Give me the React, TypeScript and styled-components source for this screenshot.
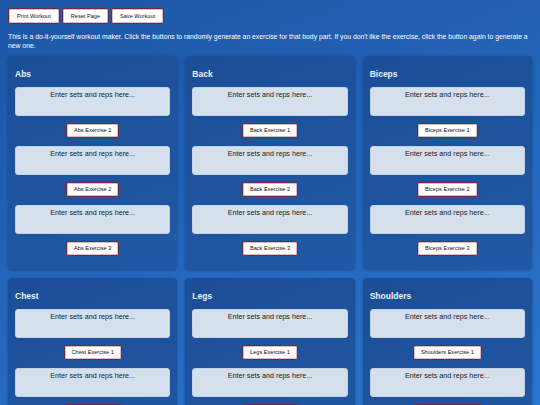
import * as React from 'react';
import styled, { createGlobalStyle } from 'styled-components';

const GlobalStyle = createGlobalStyle`
  html, body {
    margin: 0;
    padding: 0;
  }
  body {
    font-family: "Liberation Sans", Arial, sans-serif;
    background: linear-gradient(160deg, #1d56a6 0%, #2466bb 45%, #2c7bd3 100%);
    min-height: 100vh;
    overflow: hidden;
  }
`;

const Page = styled.div`
  padding: 8px;
  min-height: 100vh;
  box-sizing: border-box;
`;

const Toolbar = styled.div`
  display: flex;
  gap: 2px;
`;

const Button = styled.button`
  height: 16px;
  padding: 0 8px;
  background: #fff;
  color: #111;
  border: 1px solid #6e2a3f;
  border-radius: 2px;
  box-shadow: 0 0 0 0.5px #b87a8c inset;
  font-family: "Liberation Sans", Arial, sans-serif;
  font-size: 5.6px;
  line-height: 14px;
  cursor: pointer;
`;

const Intro = styled.p`
  margin: 9px 0 6px;
  color: #fff;
  font-size: 6.8px;
  line-height: 8.5px;
`;

const Grid = styled.div`
  display: grid;
  grid-template-columns: repeat(3, 1fr);
  gap: 9px 8px;
`;

const Card = styled.section`
  background: linear-gradient(160deg, #1c4e97 0%, #2059a6 100%);
  border-radius: 4px;
  box-shadow: 0 1px 3px rgba(0, 20, 60, 0.35);
  padding: 7px 7px 5px;
`;

const Title = styled.h2`
  margin: 6px 0 8px;
  color: #eaf2ff;
  font-size: 8.5px;
  line-height: 10px;
  font-weight: 700;
`;

const Group = styled.div`
  display: flex;
  flex-direction: column;
  align-items: center;
  margin-bottom: 8px;
`;

const Notes = styled.textarea`
  width: 100%;
  height: 29px;
  box-sizing: border-box;
  margin: 0 0 7px;
  padding: 3px 4px;
  resize: none;
  background: #d5e0ed;
  border: 1px solid #c3d2e4;
  border-radius: 3px;
  font-family: "Liberation Sans", Arial, sans-serif;
  font-size: 7.2px;
  line-height: 8px;
  text-align: center;
  color: #1a1a1a;
  outline: none;

  &::placeholder {
    color: #1a1a1a;
    opacity: 1;
  }
`;

const ExerciseButton = styled(Button)`
  height: 15px;
  line-height: 13px;
  padding: 0 7px;
`;

const parts = ['Abs', 'Back', 'Biceps', 'Chest', 'Legs', 'Shoulders'];

function BodyPart({ name }: { name: string }) {
  return (
    <Card>
      <Title>{name}</Title>
      {[1, 2, 3].map((n) => (
        <Group key={n}>
          <Notes placeholder="Enter sets and reps here..." />
          <ExerciseButton>{name} Exercise {n}</ExerciseButton>
        </Group>
      ))}
    </Card>
  );
}

export default function App() {
  return (
    <>
      <GlobalStyle />
      <Page>
        <Toolbar>
          <Button>Print Workout</Button>
          <Button>Reset Page</Button>
          <Button>Save Workout</Button>
        </Toolbar>
        <Intro>
          This is a do-it-yourself workout maker. Click the buttons to randomly generate an exercise for that body
          part. If you don't like the exercise, click the button again to generate a new one.
        </Intro>
        <Grid>
          {parts.map((p) => (
            <BodyPart key={p} name={p} />
          ))}
        </Grid>
      </Page>
    </>
  );
}
